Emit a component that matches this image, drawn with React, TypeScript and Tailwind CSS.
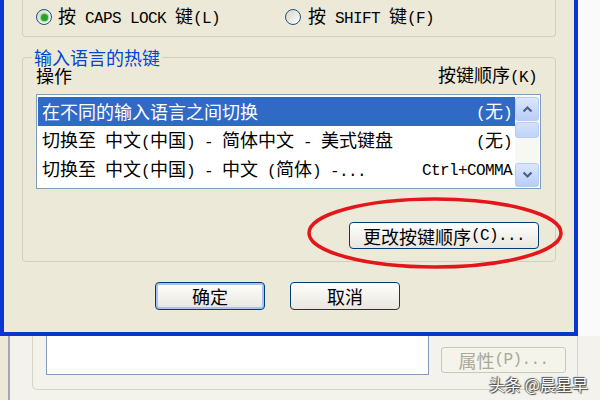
import React from "react";

const CJK_RE = /([\u2E80-\u9FFF\uFF00-\uFFEF\u3000-\u303F]+)/;

function M({ s }: { s: string }) {
  const parts = s.split(CJK_RE).filter((p) => p.length > 0);
  return (
    <>
      {parts.map((p, i) =>
        CJK_RE.test(p) ? (
          <span key={i} className="[font-family:'Noto_Sans_CJK_SC',sans-serif] text-[18px]">
            {p}
          </span>
        ) : (
          <span key={i} className="[font-family:'Liberation_Mono',monospace] text-[16px] tracking-[-0.6px] whitespace-pre">
            {p}
          </span>
        )
      )}
    </>
  );
}

function Radio({ checked }: { checked?: boolean }) {
  return (
    <span className="flex h-[16px] w-[16px] shrink-0 items-center justify-center rounded-full border border-[#1c5180] bg-linear-to-br from-[#d6d5cc] to-white">
      {checked && <span className="h-[7px] w-[7px] rounded-full bg-[#2aa22a] shadow-[0_0_1px_1px_#8fd48f]" />}
    </span>
  );
}

function SbBtn({ dir }: { dir: "up" | "down" }) {
  return (
    <div className="flex h-[24px] items-center justify-center rounded-[3px] border border-[#b7cbf3] bg-linear-to-b from-[#dce7fd] to-[#b8cdf8]">
      <svg width="11" height="8" viewBox="0 0 11 8">
        <path
          d={dir === "up" ? "M1.5 6.5 L5.5 2.5 L9.5 6.5" : "M1.5 1.5 L5.5 5.5 L9.5 1.5"}
          fill="none"
          stroke="#4d6185"
          strokeWidth="2.2"
        />
      </svg>
    </div>
  );
}

function XpButton({ label, def, w }: { label: string; def?: boolean; w: string }) {
  return (
    <div
      className={
        def
          ? "flex h-[28px] w-[110px] items-center justify-center rounded-[4px] border border-[#003c74] bg-linear-to-b from-white to-[#e8e6dd] leading-[20px] shadow-[inset_0_0_0_2px_#a9c1f2]"
          : w === "w190"
          ? "flex h-[27px] w-[190px] items-center justify-center rounded-[4px] border border-[#003c74] bg-linear-to-b from-white to-[#e8e6dd] leading-[20px]"
          : "flex h-[28px] w-[110px] items-center justify-center rounded-[4px] border border-[#003c74] bg-linear-to-b from-white to-[#e8e6dd] leading-[20px]"
      }
    >
      <M s={label} />
    </div>
  );
}

export default function App() {
  return (
    <div className="relative h-[400px] w-[600px] overflow-hidden bg-[#f3f2ec] text-black">
      <div className="flex h-[336px]">
        <div className="flex w-[578px] flex-col border-x-4 border-b-4 border-[#0a36d0] bg-[#ece9d8]">
          {/* top group (radio buttons) */}
          <div className="mx-[18px] h-[37px] rounded-b-[4px] border-x border-b border-[#d0d0bf]">
            <div className="flex h-[34px] items-center pl-[13px] leading-[20px]">
              <div className="flex w-[249px] items-center gap-[6px]">
                <Radio checked />
                <span>
                  <M s="按 CAPS LOCK 键(L)" />
                </span>
              </div>
              <div className="flex items-center gap-[7px]">
                <Radio />
                <span>
                  <M s="按 SHIFT 键(F)" />
                </span>
              </div>
            </div>
          </div>

          {/* hotkey group */}
          <div className="relative mx-[18px] mt-[20px] flex h-[205px] flex-col rounded-[4px] border border-[#d0d0bf]">
            <div className="absolute left-[9px] top-[-10px] bg-[#ece9d8] px-[2px] leading-[18px] text-[#0046d5]">
              <M s="输入语言的热键" />
            </div>
            <div className="mt-[9px] flex h-[18px] items-center justify-between pl-[13px] pr-[18px] leading-[18px]">
              <span>
                <M s="操作" />
              </span>
              <span>
                <M s="按键顺序(K)" />
              </span>
            </div>
            <div className="ml-[13px] mt-[9px] flex h-[95px] w-[505px] border border-[#7f9db9] bg-white p-[1px]">
              <div className="flex flex-1 flex-col pt-[1px]">
                <div className="flex h-[29px] items-center justify-between bg-[#316ac5] pl-[4px] pr-[3px] leading-[20px] text-white">
                  <span>
                    <M s="在不同的输入语言之间切换" />
                  </span>
                  <span>
                    <M s="(无)" />
                  </span>
                </div>
                <div className="flex h-[29px] items-center justify-between pl-[4px] pr-[3px] leading-[20px]">
                  <span>
                    <M s="切换至 中文(中国) - 简体中文 - 美式键盘" />
                  </span>
                  <span>
                    <M s="(无)" />
                  </span>
                </div>
                <div className="flex h-[29px] items-center justify-between pl-[4px] pr-[3px] leading-[20px]">
                  <span>
                    <M s="切换至 中文(中国) - 中文 (简体) -..." />
                  </span>
                  <span>
                    <M s="Ctrl+COMMA" />
                  </span>
                </div>
              </div>
              <div className="flex w-[24px] flex-col bg-[#f7f7f3] pt-[1px]">
                <SbBtn dir="up" />
                <div className="mt-[1px] h-[16px] rounded-[3px] border border-[#b7cbf3] bg-linear-to-b from-[#d4e1fc] to-[#bfd2f8]" />
                <div className="flex-1" />
                <SbBtn dir="down" />
              </div>
            </div>
            <div className="mt-[33px] flex justify-end pr-[16px]">
              <XpButton label="更改按键顺序(C)..." w="w190" />
            </div>
          </div>

          {/* OK / Cancel */}
          <div className="mt-[20px] flex gap-[25px] pl-[151px]">
            <XpButton label="确定" def w="w110" />
            <XpButton label="取消" w="w110" />
          </div>
        </div>
        <div className="flex-1 bg-[#fafafa]" />
      </div>

      {/* underlying window */}
      <div className="flex h-[64px]">
        <div className="w-[10px] border-r-2 border-[#a3a8b3] bg-[#ece9d8]" />
        <div className="ml-[22px] flex h-[54px] w-[546px] items-start rounded-b-[5px] border-x border-b border-[#d6d3c7]">
          <div className="ml-[13px] h-[39px] w-[383px] border-x border-b border-[#7f9db9] bg-white" />
          <div className="ml-[12px] mt-[11px] flex h-[26px] w-[125px] items-center justify-center rounded-[3px] border border-[#cbc8bb] bg-[#f5f4ea] leading-[20px] text-[#aca899]">
            <M s="属性(P)..." />
          </div>
        </div>
      </div>

      {/* red annotation ellipse */}
      <svg className="pointer-events-none absolute left-0 top-0" width="600" height="400">
        <ellipse cx="435" cy="233" rx="126" ry="34" fill="none" stroke="#e3161c" strokeWidth="3.5" />
      </svg>

      {/* watermark */}
      <div className="absolute bottom-[6px] right-[12px] [font-family:'Noto_Sans_CJK_SC',sans-serif] text-[16px] leading-[20px] text-white [text-shadow:0_0_1px_#333,1px_1px_1px_#444,-1px_-1px_1px_#555]">
        头条 @晨星早
      </div>
    </div>
  );
}
